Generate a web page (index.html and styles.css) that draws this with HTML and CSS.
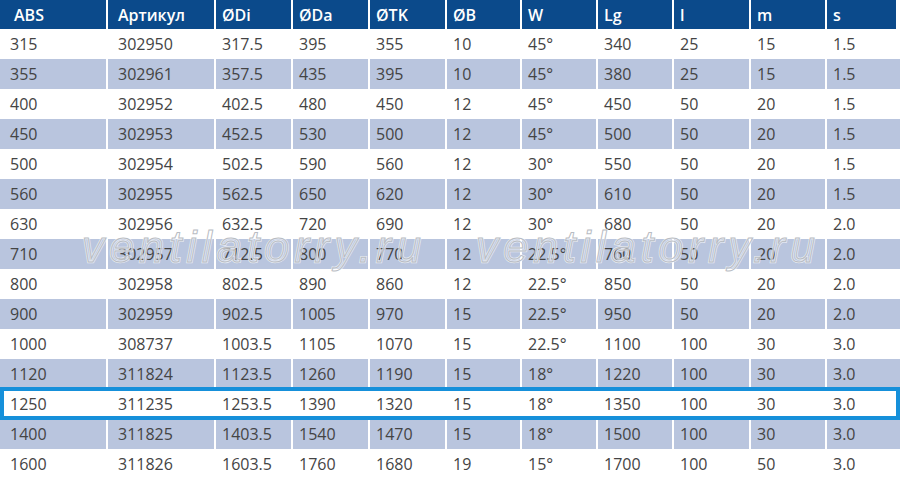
FILE: index.html
```html
<!DOCTYPE html>
<html lang="ru">
<head>
<meta charset="utf-8">
<title>Таблица размеров</title>
<link rel="stylesheet" href="styles.css">
</head>
<body>
<div class="sheet">
  <div class="row head">
    <div class="c first">ABS</div><div class="c">Артикул</div><div class="c">ØDi</div><div class="c">ØDa</div><div class="c">ØTK</div><div class="c">ØB</div><div class="c">W</div><div class="c">Lg</div><div class="c">l</div><div class="c">m</div><div class="c">s</div>
  </div>
  <div class="row"><div class="c">315</div><div class="c">302950</div><div class="c">317.5</div><div class="c">395</div><div class="c">355</div><div class="c">10</div><div class="c">45°</div><div class="c">340</div><div class="c">25</div><div class="c">15</div><div class="c">1.5</div></div>
  <div class="row alt"><div class="c">355</div><div class="c">302961</div><div class="c">357.5</div><div class="c">435</div><div class="c">395</div><div class="c">10</div><div class="c">45°</div><div class="c">380</div><div class="c">25</div><div class="c">15</div><div class="c">1.5</div></div>
  <div class="row"><div class="c">400</div><div class="c">302952</div><div class="c">402.5</div><div class="c">480</div><div class="c">450</div><div class="c">12</div><div class="c">45°</div><div class="c">450</div><div class="c">50</div><div class="c">20</div><div class="c">1.5</div></div>
  <div class="row alt"><div class="c">450</div><div class="c">302953</div><div class="c">452.5</div><div class="c">530</div><div class="c">500</div><div class="c">12</div><div class="c">45°</div><div class="c">500</div><div class="c">50</div><div class="c">20</div><div class="c">1.5</div></div>
  <div class="row"><div class="c">500</div><div class="c">302954</div><div class="c">502.5</div><div class="c">590</div><div class="c">560</div><div class="c">12</div><div class="c">30°</div><div class="c">550</div><div class="c">50</div><div class="c">20</div><div class="c">1.5</div></div>
  <div class="row alt"><div class="c">560</div><div class="c">302955</div><div class="c">562.5</div><div class="c">650</div><div class="c">620</div><div class="c">12</div><div class="c">30°</div><div class="c">610</div><div class="c">50</div><div class="c">20</div><div class="c">1.5</div></div>
  <div class="row"><div class="c">630</div><div class="c">302956</div><div class="c">632.5</div><div class="c">720</div><div class="c">690</div><div class="c">12</div><div class="c">30°</div><div class="c">680</div><div class="c">50</div><div class="c">20</div><div class="c">2.0</div></div>
  <div class="row alt"><div class="c">710</div><div class="c">302957</div><div class="c">712.5</div><div class="c">800</div><div class="c">770</div><div class="c">12</div><div class="c">22.5°</div><div class="c">760</div><div class="c">50</div><div class="c">20</div><div class="c">2.0</div></div>
  <div class="row"><div class="c">800</div><div class="c">302958</div><div class="c">802.5</div><div class="c">890</div><div class="c">860</div><div class="c">12</div><div class="c">22.5°</div><div class="c">850</div><div class="c">50</div><div class="c">20</div><div class="c">2.0</div></div>
  <div class="row alt"><div class="c">900</div><div class="c">302959</div><div class="c">902.5</div><div class="c">1005</div><div class="c">970</div><div class="c">15</div><div class="c">22.5°</div><div class="c">950</div><div class="c">50</div><div class="c">20</div><div class="c">2.0</div></div>
  <div class="row"><div class="c">1000</div><div class="c">308737</div><div class="c">1003.5</div><div class="c">1105</div><div class="c">1070</div><div class="c">15</div><div class="c">22.5°</div><div class="c">1100</div><div class="c">100</div><div class="c">30</div><div class="c">3.0</div></div>
  <div class="row alt"><div class="c">1120</div><div class="c">311824</div><div class="c">1123.5</div><div class="c">1260</div><div class="c">1190</div><div class="c">15</div><div class="c">18°</div><div class="c">1220</div><div class="c">100</div><div class="c">30</div><div class="c">3.0</div></div>
  <div class="row selected"><div class="c">1250</div><div class="c">311235</div><div class="c">1253.5</div><div class="c">1390</div><div class="c">1320</div><div class="c">15</div><div class="c">18°</div><div class="c">1350</div><div class="c">100</div><div class="c">30</div><div class="c">3.0</div></div>
  <div class="row alt"><div class="c">1400</div><div class="c">311825</div><div class="c">1403.5</div><div class="c">1540</div><div class="c">1470</div><div class="c">15</div><div class="c">18°</div><div class="c">1500</div><div class="c">100</div><div class="c">30</div><div class="c">3.0</div></div>
  <div class="row"><div class="c">1600</div><div class="c">311826</div><div class="c">1603.5</div><div class="c">1760</div><div class="c">1680</div><div class="c">19</div><div class="c">15°</div><div class="c">1700</div><div class="c">100</div><div class="c">50</div><div class="c">3.0</div></div>

  <div class="mark mark-left"><span class="glow">ventilatorry.ru</span><span class="line">ventilatorry.ru</span></div>
  <div class="mark mark-right"><span class="glow">ventilatorry.ru</span><span class="line">ventilatorry.ru</span></div>
</div>
</body>
</html>
```
FILE: styles.css
```css
html, body {
  margin: 0;
  padding: 0;
  background: #ffffff;
}

.sheet {
  position: relative;
  width: 900px;
  height: 482px;
  overflow: hidden;
  font-family: "Open Sans", "DejaVu Sans", sans-serif;
  font-size: 16px;
  color: #444444;
}

.row {
  display: grid;
  grid-template-columns: 106px 106px 75px 75px 75px 73px 74px 74px 75px 74px 1fr;
  column-gap: 2px;
  height: 30px;
}

.c {
  display: flex;
  align-items: center;
  padding-left: 6px;
  white-space: nowrap;
}

.c:nth-child(1),
.c:nth-child(2) {
  padding-left: 10px;
}

.head {
  height: 29px;
  padding-right: 4px;
}

.head .c {
  background: #0b4a8b;
  color: #ffffff;
  font-weight: 600;
}

.head .c.first {
  padding-left: 14px;
}

.alt .c {
  background: #b9c5de;
}

.selected {
  position: relative;
}

.selected::after {
  content: "";
  position: absolute;
  left: 0;
  right: 0;
  top: -2px;
  height: 33px;
  border: 4px solid #1690da;
  box-sizing: border-box;
  pointer-events: none;
}

.mark {
  position: absolute;
  top: 219px;
  font-family: "Liberation Sans", Arial, sans-serif;
  font-style: italic;
  font-size: 44px;
  letter-spacing: 5.4px;
  line-height: 56px;
  white-space: nowrap;
  pointer-events: none;
}

.mark-left { left: 82px; }
.mark-right { left: 476px; }

.mark span {
  position: absolute;
  left: 0;
  top: 0;
  color: transparent;
}

.mark .glow {
  -webkit-text-stroke: 2.5px rgba(255, 255, 255, 0.65);
}

.mark .line {
  -webkit-text-stroke: 1px #b8bcc3;
}
```
